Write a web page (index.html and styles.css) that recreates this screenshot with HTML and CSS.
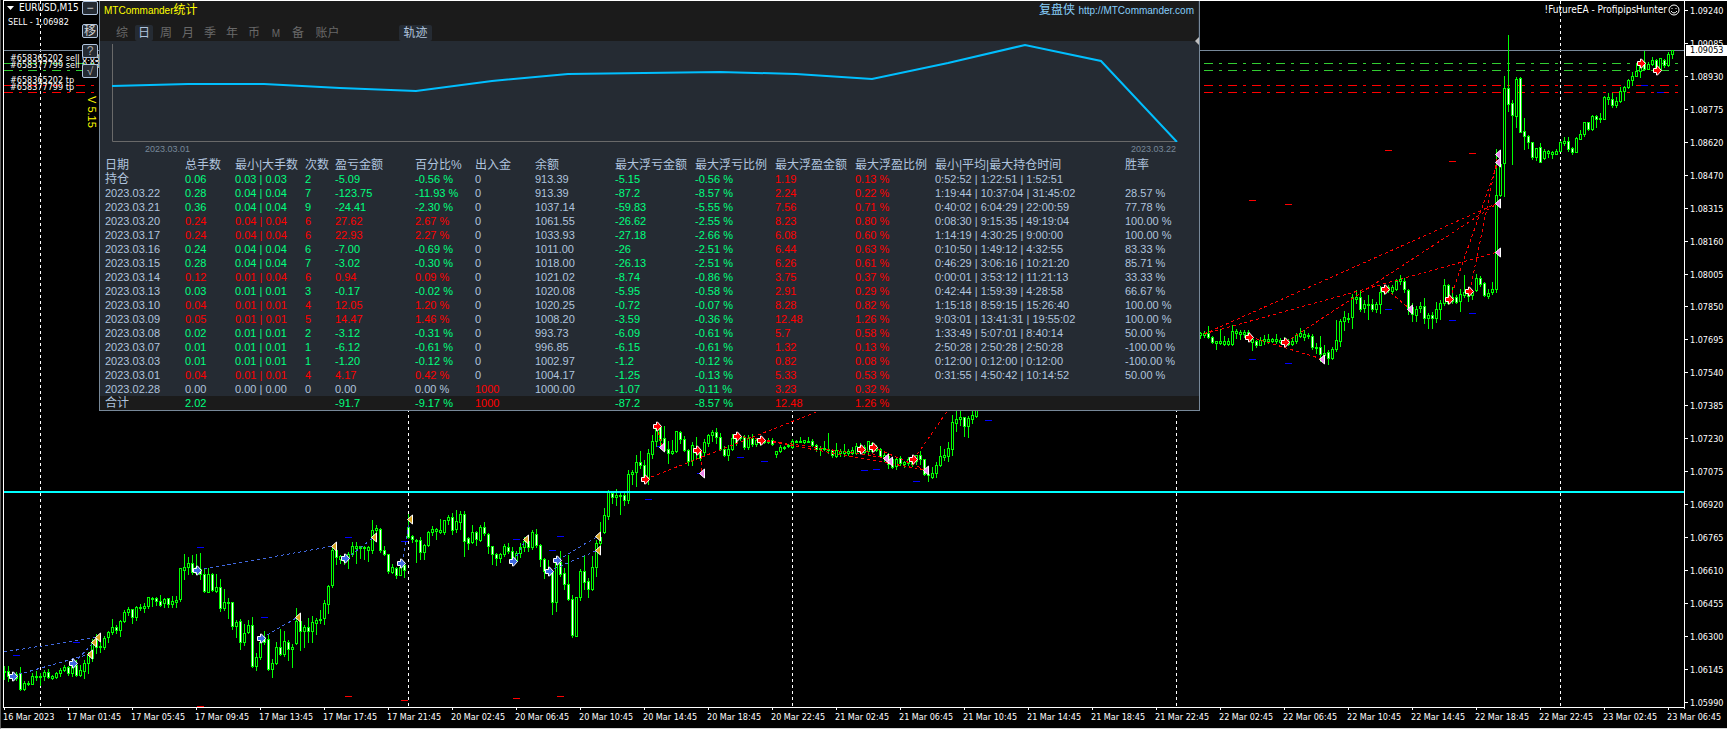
FILE: index.html
```
<!DOCTYPE html>
<html lang="zh-CN">
<head>
<meta charset="utf-8">
<title>EURUSD,M15</title>
<link rel="stylesheet" href="styles.css">
</head>
<body>
<main class="chart">
  <section class="plot">
    <svg class="plot-canvas" id="plot" viewBox="4 1 1680 706" preserveAspectRatio="none" aria-hidden="true"></svg>

    <div class="symbol">
      <div class="symbol-name"><svg class="caret" viewBox="0 0 7 4" aria-hidden="true"><path d="M0 0H7L3.5 4Z"/></svg>EURUSD,M15</div>
      <div class="symbol-signal">SELL - 1.06982</div>
    </div>
    <div class="expert">!FutureEA - ProfipipsHunter
      <svg class="smiley" viewBox="0 0 12 12" aria-hidden="true"><circle cx="6" cy="6" r="5"/><path d="M3 7Q6 11 9 7M4 4V5M8 4V5"/></svg>
    </div>

    <div class="order order-a">#658365202 sell 0.03</div>
    <div class="order order-b">#658377799 sell 0.03</div>
    <div class="order order-c">#658365202 tp</div>
    <div class="order order-d">#658377799 tp</div>

    <div class="tools">
      <button type="button" class="tool tool-min">−</button>
      <button type="button" class="tool">移</button>
      <button type="button" class="tool tool-dim">?</button>
      <button type="button" class="tool tool-dim">√</button>
      <span class="version">V 5.15</span>
    </div>

    <section class="panel">
      <header class="panel-head">
        <div class="panel-title">
          <h1 class="title"><span class="latin">MTCommander</span>统计</h1>
          <div class="site">复盘侠 <a class="latin" href="http://MTCommander.com">http://MTCommander.com</a></div>
        </div>
        <nav class="tabs">
          <button type="button" class="tab">综</button>
          <button type="button" class="tab tab-on">日</button>
          <button type="button" class="tab">周</button>
          <button type="button" class="tab">月</button>
          <button type="button" class="tab">季</button>
          <button type="button" class="tab">年</button>
          <button type="button" class="tab">币</button>
          <button type="button" class="tab"><span class="latin">M</span></button>
          <button type="button" class="tab">备</button>
          <button type="button" class="tab tab-wide">账户</button>
          <button type="button" class="tab tab-wide tab-on tab-track">轨迹</button>
        </nav>
        <svg class="handle" viewBox="0 0 4 8" aria-hidden="true"><path d="M4 0V8L0 4Z"/></svg>
      </header>
      <svg class="equity" viewBox="100 41 1099 101" preserveAspectRatio="none" aria-hidden="true">
        <path class="equity-axis" d="M112.5 44V141.5H1177"/>
        <polyline class="equity-line" points="112,86 188,84 264,84 340,88 416,91 492,81 568,74 644,73 720,72 796,74 872,79 948,63 1025,45 1101,61 1177,142"/>
      </svg>
      <div class="range"><span>2023.03.01</span><span>2023.03.22</span></div>
      <table class="stats">
        <colgroup>
          <col class="w80"><col class="w50"><col class="w70"><col class="w30"><col class="w80"><col class="w60"><col class="w60">
          <col class="w80"><col class="w80"><col class="w80"><col class="w80"><col class="w80"><col class="w190"><col>
        </colgroup>
        <thead>
          <tr><th>日期</th><th>总手数</th><th>最小|大手数</th><th>次数</th><th>盈亏金额</th><th>百分比%</th><th>出入金</th><th>余额</th><th>最大浮亏金额</th><th>最大浮亏比例</th><th>最大浮盈金额</th><th>最大浮盈比例</th><th>最小|平均|最大持仓时间</th><th>胜率</th></tr>
        </thead>
        <tbody id="rows"></tbody>
        <tfoot>
          <tr><td>合计</td><td class="down">2.02</td><td></td><td></td><td class="down">-91.7</td><td class="down">-9.17 %</td><td class="up">1000</td><td></td><td class="down">-87.2</td><td class="down">-8.57 %</td><td class="up">12.48</td><td class="up">1.26 %</td><td></td><td></td></tr>
        </tfoot>
      </table>
    </section>
  </section>

  <aside class="prices">
    <span>1.09240</span><span>1.09085</span><span>1.08930</span><span>1.08775</span><span>1.08620</span><span>1.08470</span><span>1.08315</span><span>1.08160</span><span>1.08005</span><span>1.07850</span><span>1.07695</span><span>1.07540</span><span>1.07385</span><span>1.07230</span><span>1.07075</span><span>1.06920</span><span>1.06765</span><span>1.06610</span><span>1.06455</span><span>1.06300</span><span>1.06145</span><span>1.05990</span>
    <strong class="bid">1.09053</strong>
  </aside>

  <footer class="times">
    <span>16 Mar 2023</span><span>17 Mar 01:45</span><span>17 Mar 05:45</span><span>17 Mar 09:45</span><span>17 Mar 13:45</span><span>17 Mar 17:45</span><span>17 Mar 21:45</span><span>20 Mar 02:45</span><span>20 Mar 06:45</span><span>20 Mar 10:45</span><span>20 Mar 14:45</span><span>20 Mar 18:45</span><span>20 Mar 22:45</span><span>21 Mar 02:45</span><span>21 Mar 06:45</span><span>21 Mar 10:45</span><span>21 Mar 14:45</span><span>21 Mar 18:45</span><span>21 Mar 22:45</span><span>22 Mar 02:45</span><span>22 Mar 06:45</span><span>22 Mar 10:45</span><span>22 Mar 14:45</span><span>22 Mar 18:45</span><span>22 Mar 22:45</span><span>23 Mar 02:45</span><span>23 Mar 06:45</span>
  </footer>
</main>
<script src="chart.js"></script>
</body>
</html>
```
FILE: styles.css
```
* { box-sizing: border-box; }
body {
  margin: 0;
  background: #000;
  color: #fff;
  font: 9px/12px "DejaVu Sans Condensed", "DejaVu Sans", "Noto Sans CJK SC", sans-serif;
  overflow: hidden;
}
button { font: inherit; padding: 0; margin: 0; cursor: pointer; }

.chart {
  display: grid;
  grid-template-columns: 1fr 43px;
  grid-template-rows: 1fr 20px;
  height: 100vh;
  padding-left: 2px;
  border-left: 1px solid #5a5a5a;
  border-bottom: 1px solid #d8d8d8;
}
.plot {
  position: relative;
  min-width: 0;
  border: 1px solid #fff;
  border-right: 0;
}
.plot-canvas { position: absolute; inset: 0; width: 100%; height: 100%; }

/* Chart canvas */
.grid { stroke: #fff; stroke-dasharray: 3 3; }
.bid-line { stroke: #778899; }
.signal-line { stroke: #00ffff; stroke-width: 2; }
.entry-line { stroke: #32cd32; stroke-dasharray: 9 6 3 6; }
.stop-line { stroke: #ff0000; stroke-dasharray: 9 6 3 6; }
.green { fill: #00ff00; }
.black { fill: #000; }
.white { fill: #fff; }
.trade-buy { stroke: #4169e1; stroke-dasharray: 3 3; fill: none; }
.trade-sell { stroke: #ff0000; stroke-dasharray: 3 3; fill: none; }
.mark-blue { stroke: #0000ff; }
.mark-red { stroke: #ff0000; }
.marker { stroke: #fff; }
.buy { fill: #4169e1; }
.buy-exit { fill: #daa520; }
.sell { fill: #ff0000; }
.sell-exit { fill: #ee82ee; }

/* Chart captions */
.symbol { position: absolute; left: 3px; top: 1px; white-space: nowrap; }
.symbol-name { display: flex; align-items: center; gap: 5px; font-size: 10px; }
.symbol-signal { padding: 2px 1px; }
.caret { width: 7px; height: 4px; fill: #fff; }
.expert { position: absolute; right: 4px; top: 3px; display: flex; align-items: center; gap: 1px; font-size: 10px; }
.smiley { width: 12px; height: 12px; fill: none; stroke: #fff; }
.order { position: absolute; left: 6px; white-space: nowrap; }
.order-a { top: 51px; }
.order-b { top: 58px; }
.order-c { top: 73px; }
.order-d { top: 80px; }

.tools {
  position: absolute;
  left: 78px;
  top: 0;
  display: flex;
  flex-direction: column;
  gap: 6px;
  width: 16px;
}
.tool {
  height: 14px;
  border: 1px solid #b0c4de;
  border-radius: 2px;
  background: #252b33;
  color: #d3d3d3;
  font: 12px/12px "Liberation Sans", "Noto Sans CJK SC", sans-serif;
}
.tool-min { margin-bottom: 3px; }
.tool-dim { color: #a9a9a9; }
.version {
  writing-mode: vertical-rl;
  align-self: flex-end;
  margin-top: 12px;
  color: #ff0;
  font: 11px/12px "Liberation Sans", sans-serif;
}

/* Statistics panel */
.panel {
  position: absolute;
  left: 95px;
  top: 0;
  width: 1101px;
  max-width: 100%;
  border: solid #778899;
  border-width: 0 1px 1px;
  background: #252b33;
  color: #b0c4de;
  font: 11px/14px "Liberation Sans", "Noto Sans CJK SC", sans-serif;
}
.panel-head { position: relative; height: 40px; margin-right: 1px; background: #1b1b1b; font-size: 12px; }
.latin { font-size: 10px; }
.panel-title { display: flex; justify-content: space-between; padding: 2px 4px 0; }
.title { margin: 0; color: #ff0; font: inherit; }
.site { color: #87cefa; }
.site a { color: inherit; text-decoration: none; }
.tabs { display: flex; gap: 4px; padding: 7px 0 0 13px; }
.tab {
  width: 18px;
  height: 16px;
  border: 0;
  border-radius: 2px;
  background: none;
  color: #696969;
  line-height: 16px;
}
.tab-wide { width: 33px; }
.tab-on { background: #252b33; color: #b0c4de; }
.tab-track { margin-left: 51px; }
.handle { position: absolute; right: -1px; bottom: -4px; width: 4px; height: 8px; fill: #c0c0c0; }
.equity { display: block; width: 100%; height: 101px; }
.equity-axis { fill: none; stroke: #696969; }
.equity-line { fill: none; stroke: #00bfff; stroke-width: 2; }
.range { display: flex; justify-content: space-between; padding: 0 23px 2px 45px; color: #778899; font-size: 9px; }

.stats { width: 100%; table-layout: fixed; border-collapse: collapse; }
.stats th, .stats td { height: 14px; padding: 0; font-weight: 400; text-align: left; white-space: nowrap; }
.stats th { font-size: 12px; }
.stats th:first-child, .stats td:first-child { padding-left: 5px; }
.stats .cjk, .stats tfoot td:first-child { font-size: 12px; }
.stats tfoot { background: #1b1b1b; }
.w30 { width: 30px; }
.w50 { width: 50px; }
.w60 { width: 60px; }
.w70 { width: 70px; }
.w80 { width: 80px; }
.stats col:first-child { width: 85px; }
.w190 { width: 190px; }
.up { color: #ff0000; }
.down { color: #00ff7f; }

/* Axes */
.prices {
  position: relative;
  display: flex;
  flex-direction: column;
  justify-content: space-between;
  padding-top: 4px;
  margin-bottom: -1px;
  border: solid #fff;
  border-width: 1px 0 0 1px;
}
.prices span { position: relative; padding-left: 5px; }
.prices span::before { content: ""; position: absolute; left: 0; top: 5px; width: 3px; height: 1px; background: #fff; }
.bid { position: absolute; left: 1px; right: 0; top: 44px; padding-left: 4px; background: #fff; color: #000; font-weight: 400; line-height: 11px; }
.times { grid-column: 1 / -1; display: flex; }
.times span { position: relative; flex: 0 0 calc((100% - 44px) / 26.25); padding-top: 3px; white-space: nowrap; }
.times span::before { content: ""; position: absolute; left: 1px; top: 0; width: 1px; height: 2px; background: #fff; }
```
FILE: chart.js
```
// Candles: high, body top, body bottom, low; a trailing "b" marks a falling bar.
// Each bar takes four units of the horizontal axis.
const BAR = 4;
const runs = [
  [0, `666 671 672 679,666 671 676 681 b,674 675 677 679,672 674 678 680,667 673 689 690 b,681 683 689 690,681 683 684 685,673 676 684 684,671 676 677 680,673 676 677 685,
670 672 676 680,669 672 677 678 b,675 676 678 679,672 673 677 678,668 670 673 676,665 667 670 671,666 667 673 675 b,660 666 673 676,660 665 675 676 b,665 670 675 676,
660 663 671 678,652 655 663 673,639 642 658 661,634 638 647 653,642 646 647 652,636 638 647 649,631 632 637 642,619 627 632 634,625 627 630 633 b,620 621 630 636,
610 612 621 622,607 609 612 615,609 609 617 623 b,606 607 617 620,604 607 608 610,603 606 608 612,597 597 606 608,597 598 599 606,597 598 601 605 b,595 601 605 606 b,
598 599 603 607,598 598 604 607 b,596 601 604 607,596 600 602 607,568 568 599 601,554 567 570 579,557 563 567 574,555 563 572 574 b,554 567 573 574,553 569 574 579 b,
568 574 591 592 b,568 574 592 592,573 574 590 591 b,574 587 591 592,579 587 608 611 b,589 602 608 610,598 602 603 618,602 602 626 629 b,620 622 626 637,619 621 642 649 b,
624 633 642 645,620 625 632 633,617 625 666 667 b,653 657 666 670,638 642 657 659,631 637 642 644 b,634 639 669 670 b,659 663 669 677,642 647 663 664,629 647 654 655 b,
631 641 654 656,640 642 649 660 b,644 647 649 667,608 621 643 644,620 621 631 650 b,625 627 631 647,618 627 631 642 b,616 622 631 642,618 620 623 634,610 619 620 623,
600 603 618 624,585 586 604 613,548 550 585 587,542 550 557 564 b,555 556 559 563,555 557 561 564,552 554 558 568,542 546 554 556,542 546 548 563,546 546 548 558,
546 547 548 559,546 547 550 561,520 530 550 553,525 528 530 538,528 529 550 552 b,546 550 554 555 b,554 554 571 573 b,564 567 572 573,567 568 575 578 b,563 567 575 575,
564 565 570 577 b,514 527 537 538 b,535 536 539 542 b,539 540 541 562,537 540 552 559 b,544 545 552 559,531 532 545 546,526 529 532 535,528 529 531 539,519 530 532 533,
520 520 532 534,515 517 520 524,513 517 530 534 b,510 521 529 532,511 514 522 529,511 514 541 556 b,537 538 543 549 b,525 532 542 543,531 532 539 545 b,525 527 540 541,
522 527 533 535 b,533 534 546 553 b,546 546 554 564 b,553 554 558 565 b,553 554 558 562,544 546 554 556,543 547 551 553 b,547 551 561 563 b,551 553 561 562,543 547 553 557,
537 541 547 551,540 541 547 551 b,530 532 547 549,529 534 545 547 b,544 545 559 566 b,558 559 571 578 b,560 570 573 575,571 572 602 614 b,556 562 602 611,551 562 574 576 b,
568 573 584 589 b,555 584 599 600 b,595 599 635 637 b,597 597 636 636,569 571 597 600,556 571 582 589 b,578 581 589 597 b,556 567 589 590,540 543 567 576,522 537 543 550,
508 515 532 533,490 492 516 519,491 493 497 503 b,489 495 497 505,493 495 496 514,491 495 500 505 b,470 474 500 503,470 472 474 484,455 462 472 486,451 462 465 468 b,
460 465 478 479 b,449 453 478 484,435 441 454 458,424 428 441 446,425 427 440 446 b,426 438 450 451 b,441 449 453 463 b,440 451 453 454,431 431 451 452,431 432 439 443 b,
436 439 450 451 b,449 450 461 465 b,442 445 460 465,437 449 453 458,449 450 458 460 b,439 442 452 455,434 435 443 446,430 432 435 441,428 432 437 443 b,433 437 449 450 b,
446 449 455 456 b,445 449 455 460,434 438 449 450,435 438 443 445 b,435 437 438 440,435 437 447 449 b,435 438 447 449,434 438 444 446 b,438 440 444 446,437 439 443 445,
439 440 442 443,438 440 442 443,438 440 444 445 b,451 451 454 457,445 447 451 452,446 447 448 449,444 445 446 447,439 441 447 448,440 441 442 442,437 441 442 442,
440 440 442 443,437 441 442 442,439 441 445 446 b,444 445 449 451 b,446 448 449 455,441 448 449 450,433 449 450 453,449 450 455 457 b,443 450 456 457,449 451 453 456,
444 451 453 456,449 451 453 455,447 450 453 454,443 446 453 454,443 446 452 453,445 447 452 453,441 441 451 455,442 443 451 452 b,445 447 450 451,448 449 456 457 b,
452 455 458 461,453 456 464 468 b,458 459 467 468 b,457 459 466 469,456 458 463 465 b,461 462 464 467,457 459 463 465,458 459 464 466,455 455 461 464,451 455 459 464 b,
459 459 474 475 b,466 474 475 481,467 473 477 478,462 465 473 477,446 456 465 466,449 455 457 460,442 448 456 461,415 422 449 455,408 419 423 431,408 417 419 425,
417 417 426 436 b,416 418 426 437,408 415 419 423,405 410 416 417`],
  [299, `332 333 335 338,331 333 335 337,326 333 337 338 b,336 337 342 343 b,341 341 343 349,329 341 343 344,336 341 344 345,338 341 344 345,325 331 344 345,329 331 333 338,
330 332 334 339,330 332 334 337,330 332 337 340,337 339 342 350,340 341 345 347 b,337 340 345 345,335 339 341 344,334 339 341 343,338 339 341 342,334 339 341 343,
338 340 342 343,337 340 342 345,339 341 344 345,338 341 344 345,333 335 341 343,328 333 336 337,330 334 337 340,333 335 336 338,334 336 347 349 b,343 347 348 353,
336 347 354 361 b,345 353 355 359,350 352 358 364 b,347 349 358 359,320 340 349 351,319 321 341 346,311 317 321 330,313 318 319 322,294 297 317 328,290 297 299 303,
290 297 309 311 b,300 304 308 312,295 304 305 319,299 304 309 311 b,302 304 309 312,286 292 304 313,285 289 292 294,285 287 290 292,285 287 291 294,279 281 289 290,
275 279 281 284,278 281 289 292 b,289 290 308 314 b,303 307 314 321 b,306 309 315 321,302 306 308 312,298 306 318 323 b,313 315 318 328,312 315 318 328 b,302 309 318 322,
300 303 309 319,279 285 303 305,284 285 303 304 b,287 297 301 303,295 297 302 303 b,289 294 301 311,275 292 295 297,290 292 296 301,290 292 295 299,274 278 290 291,
276 278 284 286 b,282 283 295 296 b,289 293 296 298,282 289 292 294,149 195 289 292,160 164 195 196,76 88 163 196,35 88 104 111 b,100 103 115 164 b,77 79 116 127,
77 78 132 132 b,118 131 136 149 b,135 136 142 148 b,142 142 157 159 b,148 148 157 160,143 147 162 162 b,149 151 158 159,150 151 153 157,151 152 154 158,149 151 154 154,
141 142 151 151,137 141 143 145,137 141 149 151 b,147 148 152 154 b,137 138 152 152,130 134 139 139,122 122 134 136,122 122 129 130 b,115 116 129 130,115 116 119 127 b,
113 118 119 122,96 97 119 119,93 97 99 104,93 99 105 107 b,97 101 105 107,87 91 101 102,86 87 91 100,79 80 87 88,72 76 80 85,63 71 76 76,
60 63 71 77,51 62 69 70 b,62 64 69 69,57 60 64 65,59 60 69 70 b,58 58 70 70,59 60 65 67 b,52 54 65 66,50 50 54 58`]
];

const plot = document.getElementById("plot");
const NS = "http://www.w3.org/2000/svg";
function draw(name, cls, attrs) {
  const el = document.createElementNS(NS, name);
  el.setAttribute("class", cls);
  for (const key in attrs) el.setAttribute(key, attrs[key]);
  plot.appendChild(el);
}
const line = (cls, d) => draw("path", cls, { d, "shape-rendering": "crispEdges" });
const box = (x, top, w, bottom) => `M${x} ${top}h${w}V${bottom}h${-w}Z`;

[40, 408, 792, 1176, 1560].forEach(x => line("grid", `M${x + 0.5} 1V707`));
line("bid-line", "M4 50.5H1684");
line("entry-line", "M4 63.5H1678M4 70.5H1678");
line("stop-line", "M4 85.5H1678M4 92.5H1678");

let green = "", black = "", white = "";
runs.forEach(([start, text]) => text.split(",").forEach((item, i) => {
  const [high, top, bottom, low, falling] = item.trim().split(" ");
  const x = BAR + (start + i) * BAR;
  green += box(x, +high, 1, +low + 1) + box(x - 1, +top, 3, +bottom + 1);
  if (bottom - top > 1) {
    const core = box(x, +top + 1, 1, +bottom);
    if (falling) white += core; else black += core;
  }
}));
line("green", green);
line("black", black);
line("white", white);
line("signal-line", "M4 492H1684");

// Entry-to-exit connections
[[4, 652, 98, 637], [13, 676, 90, 654], [74, 663, 94, 642], [198, 570, 334, 546], [262, 638, 298, 617],
 [346, 559, 374, 537], [402, 563, 410, 519], [514, 561, 526, 539], [549, 571, 598, 550], [558, 560, 598, 536]]
  .forEach(([a, b, c, d]) => line("trade-buy", `M${a} ${b}L${c} ${d}`));
[[646, 479, 819, 411], [657, 426, 662, 447], [701, 450, 701, 473], [737, 436, 887, 458], [761, 440, 926, 470],
 [861, 449, 890, 461], [873, 447, 926, 470], [914, 459, 948, 410], [1204, 334, 1498, 203], [1204, 334, 1498, 252],
 [1250, 337, 1322, 359], [1286, 342, 1498, 203], [1386, 289, 1410, 309], [1450, 299, 1498, 162], [1470, 291, 1498, 154]]
  .forEach(([a, b, c, d]) => line("trade-sell", `M${a} ${b}L${c} ${d}`));

// Stop and target dashes
const dashes = list => list.map(([x, y]) => `M${x - 3} ${y + 0.5}h7`).join("");
line("mark-blue", dashes([[16, 655], [76, 642], [200, 547], [264, 617], [348, 537], [404, 541], [516, 539], [552, 550],
  [560, 536], [648, 499], [660, 446], [700, 473], [740, 457], [764, 461], [864, 470], [876, 469], [916, 481], [988, 420],
  [1252, 359], [1288, 363], [1388, 309], [1452, 320], [1472, 313], [1644, 85], [1660, 92]]));
line("mark-red", dashes([[200, 706], [348, 696], [404, 700], [516, 698], [560, 696], [1252, 200], [1288, 204],
  [1388, 150], [1452, 161], [1472, 153]]));

// Entry arrows and exit triangles
const arrows = (cls, list) => list.forEach(([x, y]) =>
  draw("path", "marker " + cls, { d: `M${x - 3.5} ${y - 1.5}h3v-2.5h1l4 4.5l-4 4.5h-1v-2.5h-3Z` }));
const exits = (cls, list) => list.forEach(([x, y]) =>
  draw("path", "marker " + cls, { d: `M${x + 2.5} ${y - 4}v9l-5 -4.5Z` }));
arrows("buy", [[13, 676], [73, 663], [197, 570], [261, 638], [345, 558], [401, 563], [513, 561], [549, 571], [557, 560]]);
exits("buy-exit", [[90, 654], [94, 642], [98, 637], [298, 617], [334, 546], [374, 537], [410, 519], [526, 539], [598, 536], [598, 550]]);
arrows("sell", [[645, 479], [657, 426], [697, 450], [737, 436], [761, 440], [861, 449], [873, 447], [913, 459],
  [1249, 337], [1285, 342], [1385, 289], [1449, 299], [1469, 291], [1641, 63], [1657, 70]]);
exits("sell-exit", [[662, 447], [702, 473], [886, 458], [890, 461], [926, 470], [1322, 359], [1410, 309],
  [1498, 154], [1498, 162], [1498, 203], [1498, 252]]);

// Daily statistics, one line per day
const days = `持仓;0.06;0.03 | 0.03;2;-5.09;-0.56 %;0;913.39;-5.15;-0.56 %;1.19;0.13 %;0:52:52 | 1:22:51 | 1:52:51;
2023.03.22;0.28;0.04 | 0.04;7;-123.75;-11.93 %;0;913.39;-87.2;-8.57 %;2.24;0.22 %;1:19:44 | 10:37:04 | 31:45:02;28.57 %
2023.03.21;0.36;0.04 | 0.04;9;-24.41;-2.30 %;0;1037.14;-59.83;-5.55 %;7.56;0.71 %;0:40:02 | 6:04:29 | 22:00:59;77.78 %
2023.03.20;0.24;0.04 | 0.04;6;27.62;2.67 %;0;1061.55;-26.62;-2.55 %;8.23;0.80 %;0:08:30 | 9:15:35 | 49:19:04;100.00 %
2023.03.17;0.24;0.04 | 0.04;6;22.93;2.27 %;0;1033.93;-27.18;-2.66 %;6.08;0.60 %;1:14:19 | 4:30:25 | 9:00:00;100.00 %
2023.03.16;0.24;0.04 | 0.04;6;-7.00;-0.69 %;0;1011.00;-26;-2.51 %;6.44;0.63 %;0:10:50 | 1:49:12 | 4:32:55;83.33 %
2023.03.15;0.28;0.04 | 0.04;7;-3.02;-0.30 %;0;1018.00;-26.13;-2.51 %;6.26;0.61 %;0:46:29 | 3:06:16 | 10:21:20;85.71 %
2023.03.14;0.12;0.01 | 0.04;6;0.94;0.09 %;0;1021.02;-8.74;-0.86 %;3.75;0.37 %;0:00:01 | 3:53:12 | 11:21:13;33.33 %
2023.03.13;0.03;0.01 | 0.01;3;-0.17;-0.02 %;0;1020.08;-5.95;-0.58 %;2.91;0.29 %;0:42:44 | 1:59:39 | 4:28:58;66.67 %
2023.03.10;0.04;0.01 | 0.01;4;12.05;1.20 %;0;1020.25;-0.72;-0.07 %;8.28;0.82 %;1:15:18 | 8:59:15 | 15:26:40;100.00 %
2023.03.09;0.05;0.01 | 0.01;5;14.47;1.46 %;0;1008.20;-3.59;-0.36 %;12.48;1.26 %;9:03:01 | 13:41:31 | 19:55:02;100.00 %
2023.03.08;0.02;0.01 | 0.01;2;-3.12;-0.31 %;0;993.73;-6.09;-0.61 %;5.7;0.58 %;1:33:49 | 5:07:01 | 8:40:14;50.00 %
2023.03.07;0.01;0.01 | 0.01;1;-6.12;-0.61 %;0;996.85;-6.15;-0.61 %;1.32;0.13 %;2:50:28 | 2:50:28 | 2:50:28;-100.00 %
2023.03.03;0.01;0.01 | 0.01;1;-1.20;-0.12 %;0;1002.97;-1.2;-0.12 %;0.82;0.08 %;0:12:00 | 0:12:00 | 0:12:00;-100.00 %
2023.03.01;0.04;0.01 | 0.01;4;4.17;0.42 %;0;1004.17;-1.25;-0.13 %;5.33;0.53 %;0:31:55 | 4:50:42 | 10:14:52;50.00 %
2023.02.28;0.00;0.00 | 0.00;0;0.00;0.00 %;1000;1000.00;-1.07;-0.11 %;3.23;0.32 %;;`;
const sign = value => value > 0 ? "up" : value < 0 ? "down" : "";
document.getElementById("rows").innerHTML = days.split("\n").map(day => {
  const cells = day.split(";").slice(0, 14);
  const result = sign(+cells[4]);
  return "<tr>" + cells.map((cell, i) => {
    let cls = "";
    if (i === 0 && cell === "持仓") cls = "cjk";
    else if (i >= 1 && i <= 5) cls = result;
    else if (i === 6) cls = sign(+cell);
    else if (i === 8 || i === 9) cls = "down";
    else if (i === 10 || i === 11) cls = "up";
    return `<td class="${cls}">${cell}</td>`;
  }).join("") + "</tr>";
}).join("");
```
